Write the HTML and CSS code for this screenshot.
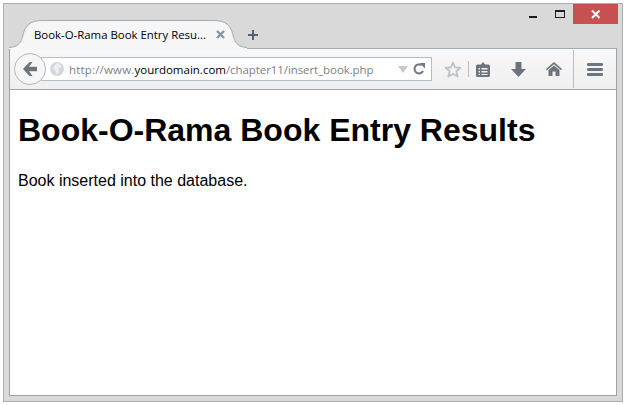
FILE: index.html
```html
<!DOCTYPE html>
<html lang="en">
<head>
<meta charset="utf-8">
<title>Book-O-Rama Book Entry Results</title>
<link rel="stylesheet" href="styles.css">
</head>
<body>
<div class="window">
  <div class="titlebar">
    <div class="tab">
      <svg class="tab-shape" width="238" height="29" viewBox="0 0 238 29">
        <path d="M0 27.500C9 27 12 23 14 15C16 6 21 0.500 33 0.500H205C217 0.500 222 6 224 15C226 23 229 27 238 27.500V29H0Z" fill="#f6f6f6"/>
        <path d="M0 27.500C9 27 12 23 14 15C16 6 21 0.500 33 0.500H205C217 0.500 222 6 224 15C226 23 229 27 238 27.500" fill="none" stroke="#a4abb5"/>
      </svg>
      <span class="tab-title">Book-O-Rama Book Entry Resu...</span>
      <svg class="tab-close" width="9" height="9" viewBox="0 0 9 9"><path d="M1 1L8 8M8 1L1 8" stroke="#8a95a3" stroke-width="2.400"/></svg>
    </div>
    <svg class="new-tab" width="12" height="12" viewBox="0 0 12 12"><path d="M6 1V11M1 6H11" stroke="#566270" stroke-width="2"/></svg>
    <div class="controls">
      <svg class="ctl-min" width="8" height="2" viewBox="0 0 8 2"><rect width="8" height="2" fill="#1c1c1c"/></svg>
      <svg class="ctl-max" width="10" height="8" viewBox="0 0 10 8"><rect x="0.500" y="0.500" width="9" height="7" fill="none" stroke="#222"/><rect x="0" y="0" width="10" height="2" fill="#222"/></svg>
      <div class="ctl-close"><svg width="10" height="9" viewBox="0 0 10 9"><path d="M1 0.500L8.500 8M8.500 0.500L1 8" stroke="#fff" stroke-width="2"/></svg></div>
    </div>
  </div>
  <div class="frame">
    <div class="toolbar">
      <div class="back">
        <svg width="14" height="14" viewBox="0 0 14 14"><path d="M6.500 0L0 7L6.500 14H9.500L6 9.200H14V4.800H6L9.500 0Z" fill="#6b7580"/></svg>
      </div>
      <div class="urlbar">
        <svg class="globe" width="14" height="14" viewBox="0 0 14 14"><circle cx="7" cy="7" r="7" fill="#d4d8dc"/><path d="M7 1C9.500 2 11 3 11.500 5L8.500 6.500L9 9.500L6.500 12.500L5.500 8.500L3 7L4 4Z" fill="#eceef0"/></svg>
        <div class="url"><span class="url-dim url-scheme">http://www.</span><span class="url-host">yourdomain.com</span><span class="url-dim url-path">/chapter11/insert_book.php</span></div>
        <svg class="drop" width="10" height="7" viewBox="0 0 10 7"><path d="M0 0H10L5 7Z" fill="#c3c9cf"/></svg>
        <svg class="reload" width="12" height="12" viewBox="0 0 12 12"><path d="M10 8A4.500 4.500 0 1 1 8.500 2.200" fill="none" stroke="#6f7a86" stroke-width="2"/><path d="M6.500 0H12V5.500Z" fill="#6f7a86"/></svg>
      </div>
      <svg class="star" width="18" height="17" viewBox="0 0 18 17"><path d="M9 1.500L11.100 6.400L16.400 6.800L12.400 10.300L13.600 15.500L9 12.800L4.400 15.500L5.600 10.300L1.600 6.800L6.900 6.400Z" fill="#f3f3f3" stroke="#bfc2c5" stroke-width="1.800" stroke-linejoin="round"/></svg>
      <span class="sep sep-short"></span>
      <svg class="clip" width="14" height="15" viewBox="0 0 14 15"><path d="M1.500 2.500H5L7 0L9 2.500H12.500A1.500 1.500 0 0 1 14 4V13.500A1.500 1.500 0 0 1 12.500 15H1.500A1.500 1.500 0 0 1 0 13.500V4A1.500 1.500 0 0 1 1.500 2.500Z" fill="#6d747c"/><path d="M2.500 6H4V7.500H2.500ZM5.500 6H11.500V7.500H5.500ZM2.500 9H4V10.500H2.500ZM5.500 9H11.500V10.500H5.500ZM2.500 12H4V13H2.500ZM5.500 12H11.500V13H5.500Z" fill="#f3f3f3"/></svg>
      <svg class="down" width="15" height="15" viewBox="0 0 15 15"><path d="M4.500 0H10.500V7H15L7.500 15L0 7H4.500Z" fill="#6d747c"/></svg>
      <svg class="home" width="16" height="14" viewBox="0 0 16 14"><path d="M8 0L16 7L15 8.300L8 2.300L1 8.300L0 7Z" fill="#6d747c"/><path d="M8 3.500L13.500 8V14H9.500V9.500H6.500V14H2.500V8Z" fill="#6d747c"/></svg>
      <span class="sep sep-tall"></span>
      <svg class="menu" width="16" height="13" viewBox="0 0 16 13"><rect width="16" height="3" rx="1.200" fill="#6d747c"/><rect y="5" width="16" height="3" rx="1.200" fill="#6d747c"/><rect y="10" width="16" height="3" rx="1.200" fill="#6d747c"/></svg>
    </div>
    <main class="page">
      <h1>Book-O-Rama Book Entry Results</h1>
      <p>Book inserted into the database.</p>
    </main>
  </div>
</div>
</body>
</html>
```
FILE: styles.css
```css
html, body { margin: 0; padding: 0; background: #fff; }
body { width: 626px; height: 405px; overflow: hidden; }
.window {
  box-sizing: border-box;
  width: 620px;
  height: 399px;
  margin: 3px 0 0 3px;
  padding: 0 5px 5px 5px;
  background: #d9d9d9;
  border: 1px solid #adadad;
  display: flex;
  flex-direction: column;
}
.titlebar {
  height: 44px;
  flex: none;
  display: flex;
  align-items: flex-end;
  position: relative;
}
.tab {
  position: relative;
  width: 238px;
  height: 29px;
  margin-bottom: -1px;
  display: flex;
  align-items: center;
  flex: none;
  z-index: 1;
}
.tab-shape { position: absolute; left: 0; top: 0; }
.tab-title {
  position: relative;
  margin-left: 25px;
  width: 182px;
  font: 11.4px "Open Sans", sans-serif;
  color: #000;
  white-space: nowrap;
}
.tab-close { position: relative; }
.new-tab { margin: 0 0 7px 0; }
.controls {
  margin-left: auto;
  align-self: flex-start;
  display: flex;
  align-items: flex-start;
}
.ctl-min { margin: 12px 18px 0 0; }
.ctl-max { margin: 6px 8px 0 0; }
.ctl-close {
  width: 45px;
  height: 20px;
  background: #c75050;
  display: flex;
  align-items: center;
  justify-content: center;
  margin-right: -1px;
}
.frame {
  flex: 1;
  display: flex;
  flex-direction: column;
  border: 1px solid #9aa2ab;
  border-top-color: #a4abb5;
  background: #fff;
  min-height: 0;
}
.toolbar {
  height: 41px;
  flex: none;
  box-sizing: border-box;
  border-bottom: 1px solid #a0a5ab;
  background: linear-gradient(#f8f8f8, #efefef);
  display: flex;
  align-items: center;
  position: relative;
}
.back {
  width: 32px;
  height: 32px;
  box-sizing: border-box;
  margin-left: 4px;
  border: 1px solid #b4b8bd;
  border-radius: 50%;
  background: #f6f6f6;
  display: flex;
  align-items: center;
  justify-content: center;
  position: relative;
  z-index: 1;
  flex: none;
}
.urlbar {
  box-sizing: border-box;
  width: 391px;
  height: 24px;
  margin-left: -5px;
  padding: 0 5px 0 8px;
  background: #fff;
  border: 1px solid #b4bcc6;
  display: flex;
  align-items: center;
  flex: none;
}
.globe { flex: none; }
.url {
  margin-left: 5px;
  width: 329px;
  flex: none;
  font: 11.5px "Open Sans", sans-serif;
  white-space: nowrap;
}
.url-dim { color: #7c7f83; }
.url-scheme { letter-spacing: 0.18px; }
.url-path { letter-spacing: -0.08px; }
.url-host { color: #000; }
.drop { flex: none; }
.reload { margin-left: 5px; flex: none; }
.star { margin-left: 12px; flex: none; }
.sep { width: 1px; background: #b9bec4; flex: none; }
.sep-short { height: 16px; margin-left: 6px; }
.sep-tall { height: 38px; margin-left: 11px; }
.clip { margin-left: 7px; flex: none; }
.down { margin-left: 21px; flex: none; }
.home { margin-left: 20px; flex: none; }
.menu { margin-left: 13px; flex: none; }
.page {
  flex: 1;
  padding: 0 8px;
  font-family: "Liberation Sans", Arial, sans-serif;
  color: #000;
}
h1 { font-size: 32px; font-weight: 700; margin: 21px 0 0; line-height: 38px; }
p { font-size: 16px; margin: 23px 0 0; line-height: 18px; }
```
